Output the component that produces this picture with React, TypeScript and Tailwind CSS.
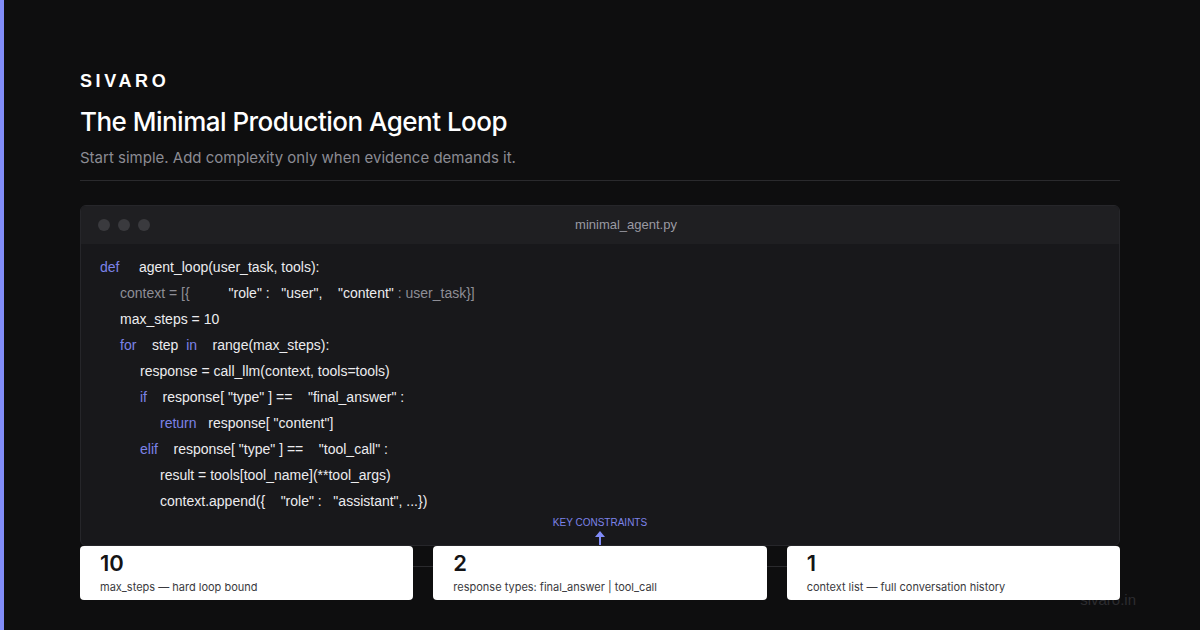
import React from "react";

const K = ({ children }: { children: React.ReactNode }) => <span className="text-[#7c83e8]">{children}</span>;
const G = ({ children }: { children: React.ReactNode }) => <span className="text-[#8e8e96]">{children}</span>;

const Line = ({ indent, children }: { indent: number; children: React.ReactNode }) => (
  <div className="h-[26px] flex items-center whitespace-pre" style={{ paddingLeft: indent * 20 }}>{children}</div>
);

export default function App() {
  return (
    <div className="w-[1200px] h-[630px] bg-[#0e0e0f] flex overflow-hidden relative" style={{ fontFamily: '"Liberation Sans", Arial, sans-serif' }}>
      <div className="w-[4px] bg-[#818cf8] shrink-0" />
      <div className="flex-1 pl-[76px] pr-[80px] pt-[69px] flex flex-col">
        <div className="text-[18px] font-semibold tracking-[0.2em] text-white leading-[24px]">SIVARO</div>
        <div className="mt-[13px] text-[26px] text-white leading-[32px] font-medium" style={{ fontFamily: 'Inter, sans-serif', letterSpacing: '-0.02em' }}>The Minimal Production Agent Loop</div>
        <div className="mt-[10px] text-[15px] text-[#8b8b93] leading-[20px]" style={{ fontFamily: 'Inter, sans-serif' }}>Start simple. Add complexity only when evidence demands it.</div>
        <div className="mt-[12px] h-px bg-[#2a2a2d]" />
        <div className="mt-[24px] h-[341px] rounded-[6px] border border-[#26262a] bg-[#18181b] flex flex-col overflow-hidden">
          <div className="h-[38px] bg-[#1f1f22] flex items-center px-[17px] relative">
            <div className="flex gap-[8px]">
              <div className="w-[12px] h-[12px] rounded-full bg-[#3a3a3e]" />
              <div className="w-[12px] h-[12px] rounded-full bg-[#3a3a3e]" />
              <div className="w-[12px] h-[12px] rounded-full bg-[#3a3a3e]" />
            </div>
            <div className="flex-1 text-center text-[13px] text-[#9a9aa2]">minimal_agent.py</div>
          </div>
          <div className="pl-[19px] pt-[10px] text-[14px] text-[#ececef] flex flex-col">
            <Line indent={0}><K>def</K>{"     agent_loop(user_task, tools):"}</Line>
            <Line indent={1}><G>{"context = [{"}</G>{'          "role" :   "user",    "content" '}<G>{": user_task}]"}</G></Line>
            <Line indent={1}>{"max_steps = 10"}</Line>
            <Line indent={1}><K>for</K>{"    step  "}<K>in</K>{"    range(max_steps):"}</Line>
            <Line indent={2}>{"response = call_llm(context, tools=tools)"}</Line>
            <Line indent={2}><K>if</K>{'    response[ "type" ] ==    "final_answer" :'}</Line>
            <Line indent={3}><K>return</K>{'   response[ "content"]'}</Line>
            <Line indent={2}><K>elif</K>{'    response[ "type" ] ==    "tool_call" :'}</Line>
            <Line indent={3}>{"result = tools[tool_name](**tool_args)"}</Line>
            <Line indent={3}>{'context.append({    "role" :   "assistant", ...})'}</Line>
            <div className="flex flex-col items-center mt-[2px] pr-[19px]">
              <div className="text-[10px] text-[#7c83e8] leading-[14px]">KEY CONSTRAINTS</div>
              <svg width="12" height="14" viewBox="0 0 12 14" className="mt-[1px]">
                <path d="M6 0 L11 6 L7 6 L7 14 L5 14 L5 6 L1 6 Z" fill="#818cf8" />
              </svg>
            </div>
          </div>
        </div>
        <div className="relative">
          <div className="absolute left-0 right-0 top-[20px] h-px bg-[#2a2a2d]" />
          <div className="absolute right-[-16px] top-[43px] text-[15px] text-[#2c2c30]">sivaro.in</div>
          <div className="relative grid grid-cols-3 gap-[20px]">
            {[
              ["10", "max_steps — hard loop bound"],
              ["2", "response types: final_answer | tool_call"],
              ["1", "context list — full conversation history"],
            ].map(([n, l]) => (
              <div key={n} className="bg-white rounded-[4px] h-[54px] px-[20px] pt-[3px]">
                <div className="text-[22px] font-semibold text-[#141416] leading-[28px]" style={{ fontFamily: 'Inter, sans-serif' }}>{n}</div>
                <div className="text-[11px] text-[#3a3a3e] leading-[16px] mt-[2px]" style={{ fontFamily: 'Inter, sans-serif' }}>{l}</div>
              </div>
            ))}
          </div>
        </div>
      </div>
    </div>
  );
}
